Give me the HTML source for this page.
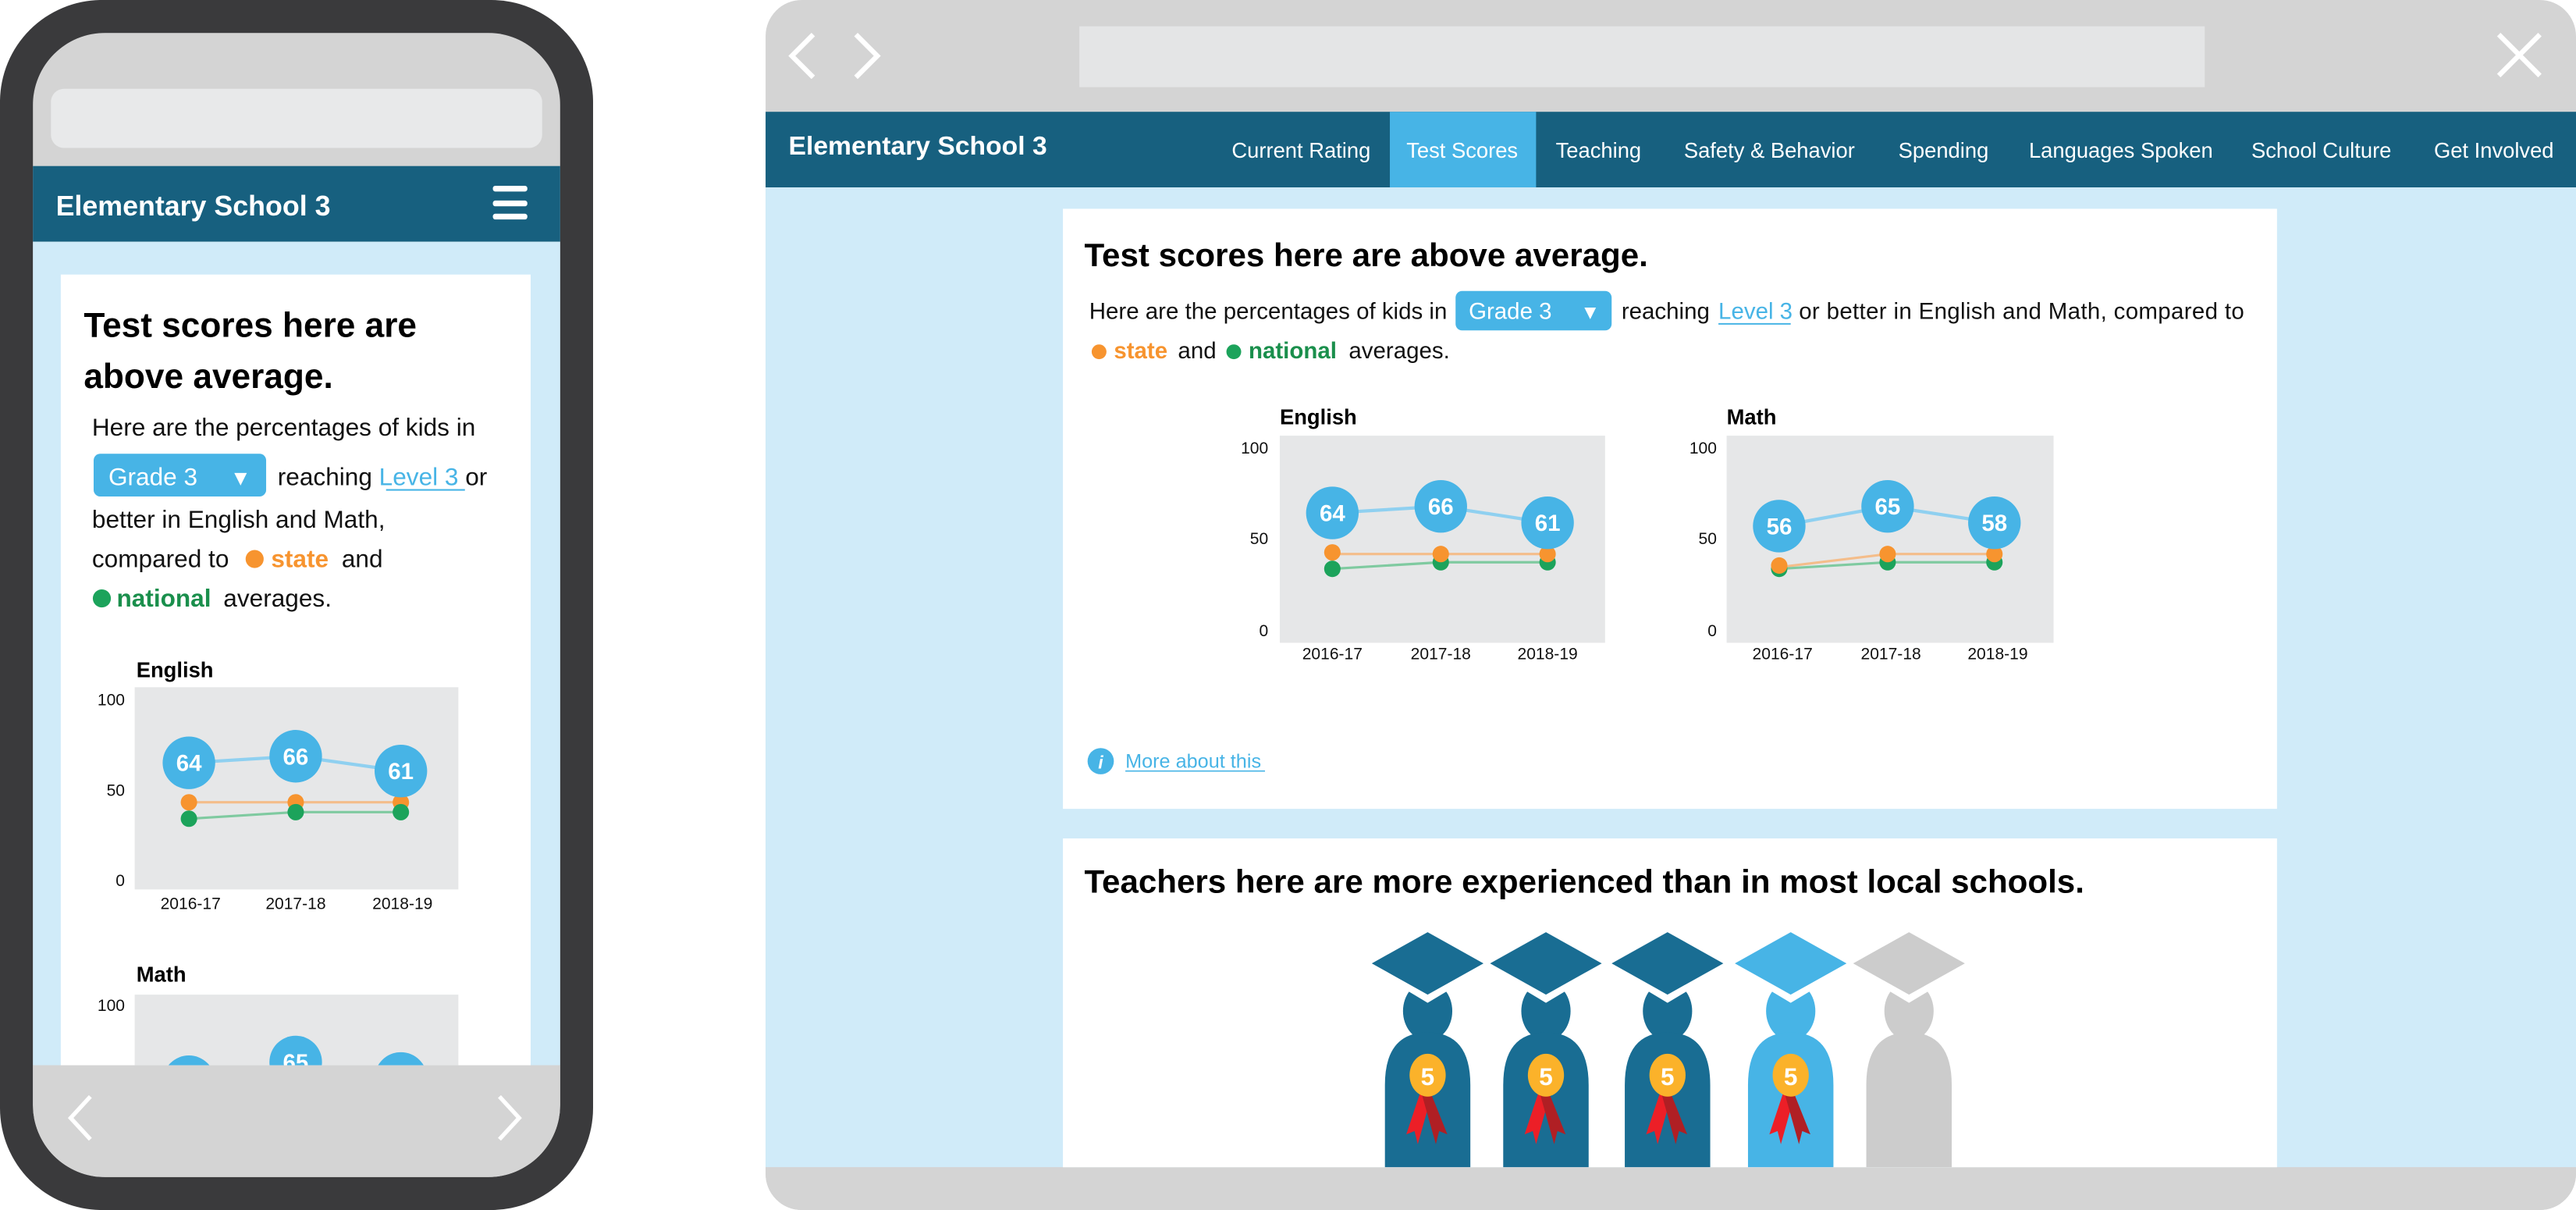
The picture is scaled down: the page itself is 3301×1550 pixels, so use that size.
<!DOCTYPE html>
<html><head><meta charset="utf-8"><style>
html,body{margin:0;padding:0;background:#fff;width:3301px;height:1550px;overflow:hidden}
svg{display:block}
text{font-family:"Liberation Sans",sans-serif}
</style></head><body>
<svg width="3301" height="1550" viewBox="0 0 1568 736" preserveAspectRatio="none" xmlns="http://www.w3.org/2000/svg">
<defs>
<clipPath id="phoneScreen"><rect x="20" y="20" width="321" height="696" rx="44"/></clipPath>
<clipPath id="phoneContent"><rect x="20" y="147" width="321" height="501"/></clipPath>
<clipPath id="browser"><rect x="466" y="0" width="1102" height="736" rx="22"/></clipPath>
<clipPath id="card2"><rect x="647" y="510" width="739" height="200"/></clipPath>
<g id="fig">
<ellipse cx="0" cy="615" rx="15" ry="18"/>
<path d="M-26,710 L-26,660 Q-26,628 0,628 Q26,628 26,660 L26,710 Z"/>
</g>
<g id="notch"><polygon points="-20,585 -20,598 0,610 20,598 20,585" fill="#fff"/></g>
<g id="medal">
<path d="M-3,660 L-13,690 L-8,688 L-6,696 L3,664 Z" fill="#ec1f27"/>
<path d="M0,660 L12,690 L7,688 L5,696 L-4,664 Z" fill="#b01f24"/>
<ellipse cx="0" cy="654" rx="11" ry="13" fill="#fbb22a"/>
<text x="0" y="660" font-size="15" font-weight="bold" fill="#fff" text-anchor="middle">5</text>
</g>
</defs>

<!-- PHONE -->
<rect x="0" y="0" width="361" height="736" rx="62" fill="#3a3a3c"/>
<g clip-path="url(#phoneScreen)">
<rect x="20" y="20" width="321" height="696" fill="#d4d4d4"/>
<rect x="31" y="54" width="299" height="36" rx="8" fill="#e8e9ea"/>
<rect x="20" y="101" width="321" height="46" fill="#17607f"/>
<text x="34" y="131" font-size="17" font-weight="bold" fill="#fff">Elementary School 3</text>
<rect x="300" y="113" width="21" height="3.5" rx="1.5" fill="#fff"/>
<rect x="300" y="122" width="21" height="3.5" rx="1.5" fill="#fff"/>
<rect x="300" y="130" width="21" height="3.5" rx="1.5" fill="#fff"/>
<g clip-path="url(#phoneContent)">
<rect x="20" y="147" width="321" height="501" fill="#d0ebf9"/>
<rect x="37" y="167" width="286" height="500" fill="#fff"/>
<text x="51" y="205" font-size="21" font-weight="bold" fill="#000">Test scores here are</text>
<text x="51" y="236" font-size="21" font-weight="bold" fill="#000">above average.</text>
<text x="56" y="265" font-size="15" fill="#111">Here are the percentages of kids in</text>
<rect x="57" y="276" width="105" height="26" rx="4" fill="#47b4e6"/>
<text x="66" y="295" font-size="15" fill="#fff">Grade 3</text>
<text x="140" y="295" font-size="13" fill="#fff">▼</text>
<text x="169" y="295" font-size="15" fill="#111">reaching <tspan fill="#47b4e6">Level 3</tspan> or</text>
<line x1="235" y1="298" x2="283" y2="298" stroke="#47b4e6" stroke-width="1"/>
<text x="56" y="321" font-size="15" fill="#111">better in English and Math,</text>
<text x="56" y="345" font-size="15" fill="#111">compared to</text>
<circle cx="155" cy="340" r="5.5" fill="#f7942f"/>
<text x="165" y="345" font-size="15" font-weight="bold" fill="#f7942f">state</text>
<text x="208" y="345" font-size="15" fill="#111">and</text>
<circle cx="62" cy="364" r="5.5" fill="#1ca35b"/>
<text x="71" y="369" font-size="15" font-weight="bold" fill="#1a8f4c">national</text>
<text x="136" y="369" font-size="15" fill="#111">averages.</text>
<text x="83" y="412" font-size="13" font-weight="bold" fill="#000">English</text>
<rect x="82" y="418" width="197" height="123" fill="#e6e7e8"/>
<text x="76" y="429" font-size="10" fill="#111" text-anchor="end">100</text>
<text x="76" y="484" font-size="10" fill="#111" text-anchor="end">50</text>
<text x="76" y="539" font-size="10" fill="#111" text-anchor="end">0</text>
<text x="116" y="553" font-size="10" fill="#111" text-anchor="middle">2016-17</text>
<text x="180" y="553" font-size="10" fill="#111" text-anchor="middle">2017-18</text>
<text x="245" y="553" font-size="10" fill="#111" text-anchor="middle">2018-19</text>
<polyline points="115,488 180,488 244,488" fill="none" stroke="#f4bd8a" stroke-width="1.5"/>
<polyline points="115,498 180,494 244,494" fill="none" stroke="#7fcaa0" stroke-width="1.5"/>
<circle cx="115" cy="488" r="5" fill="#f7942f"/><circle cx="180" cy="488" r="5" fill="#f7942f"/><circle cx="244" cy="488" r="5" fill="#f7942f"/>
<circle cx="115" cy="498" r="5" fill="#1ca35b"/><circle cx="180" cy="494" r="5" fill="#1ca35b"/><circle cx="244" cy="494" r="5" fill="#1ca35b"/>
<polyline points="115,464 180,460 244,469" fill="none" stroke="#8fd0f0" stroke-width="2"/>
<circle cx="115" cy="464" r="16" fill="#47b4e6"/><circle cx="180" cy="460" r="16" fill="#47b4e6"/><circle cx="244" cy="469" r="16" fill="#47b4e6"/>
<text x="115" y="469" font-size="14" font-weight="bold" fill="#fff" text-anchor="middle">64</text>
<text x="180" y="465" font-size="14" font-weight="bold" fill="#fff" text-anchor="middle">66</text>
<text x="244" y="474" font-size="14" font-weight="bold" fill="#fff" text-anchor="middle">61</text>
<text x="83" y="597" font-size="13" font-weight="bold" fill="#000">Math</text>
<rect x="82" y="605" width="197" height="60" fill="#e6e7e8"/>
<text x="76" y="615" font-size="10" fill="#111" text-anchor="end">100</text>
<circle cx="115" cy="658" r="16" fill="#47b4e6"/><circle cx="180" cy="646" r="16" fill="#47b4e6"/><circle cx="244" cy="656" r="16" fill="#47b4e6"/>
<text x="180" y="651" font-size="14" font-weight="bold" fill="#fff" text-anchor="middle">65</text>
</g>
<rect x="20" y="648" width="321" height="68" fill="#d4d4d4"/>
<polyline points="55,667 43,680 55,693" fill="none" stroke="#fff" stroke-width="2.5"/>
<polyline points="304,667 316,680 304,693" fill="none" stroke="#fff" stroke-width="2.5"/>
</g>

<!-- BROWSER -->
<g clip-path="url(#browser)">
<rect x="466" y="0" width="1102" height="736" fill="#d4d4d4"/>
<rect x="657" y="16" width="685" height="37" fill="#e4e5e6"/>
<polyline points="495,21 482,34 495,47" fill="none" stroke="#fff" stroke-width="3"/>
<polyline points="521,21 534,34 521,47" fill="none" stroke="#fff" stroke-width="3"/>
<line x1="1521" y1="21" x2="1546" y2="46" stroke="#fff" stroke-width="3"/>
<line x1="1546" y1="21" x2="1521" y2="46" stroke="#fff" stroke-width="3"/>
<rect x="466" y="68" width="1102" height="46" fill="#17607f"/>
<text x="480" y="94" font-size="16" font-weight="bold" fill="#fff">Elementary School 3</text>
<rect x="846" y="68" width="89" height="46" fill="#47b4e6"/>
<g font-size="13" fill="#fff" text-anchor="middle">
<text x="792" y="96">Current Rating</text>
<text x="890" y="96">Test Scores</text>
<text x="973" y="96">Teaching</text>
<text x="1077" y="96">Safety &amp; Behavior</text>
<text x="1183" y="96">Spending</text>
<text x="1291" y="96">Languages Spoken</text>
<text x="1413" y="96">School Culture</text>
<text x="1518" y="96">Get Involved</text>
</g>
<rect x="466" y="114" width="1102" height="596" fill="#d0ebf9"/>
<rect x="466" y="710" width="1102" height="26" fill="#d4d4d4"/>

<rect x="647" y="127" width="739" height="365" fill="#fff"/>
<text x="660" y="162" font-size="20" font-weight="bold" fill="#000">Test scores here are above average.</text>
<text x="663" y="194" font-size="14" fill="#111">Here are the percentages of kids in</text>
<rect x="886" y="177" width="95" height="24" rx="4" fill="#47b4e6"/>
<text x="894" y="194" font-size="14" fill="#fff">Grade 3</text>
<text x="962" y="194" font-size="12" fill="#fff">▼</text>
<text x="987" y="194" font-size="14" fill="#111">reaching</text>
<text x="1046" y="194" font-size="14" fill="#47b4e6">Level 3</text>
<line x1="1046" y1="197" x2="1090" y2="197" stroke="#47b4e6" stroke-width="1"/>
<text x="1095" y="194" font-size="14" fill="#111" textLength="271">or better in English and Math, compared to</text>
<circle cx="669" cy="214" r="4.5" fill="#f7942f"/>
<text x="678" y="218" font-size="14" font-weight="bold" fill="#f7942f">state</text>
<text x="717" y="218" font-size="14" fill="#111">and</text>
<circle cx="751" cy="214" r="4.5" fill="#1ca35b"/>
<text x="760" y="218" font-size="14" font-weight="bold" fill="#1a8f4c">national</text>
<text x="821" y="218" font-size="14" fill="#111">averages.</text>

<text x="779" y="258" font-size="13" font-weight="bold" fill="#000">English</text>
<rect x="779" y="265" width="198" height="126" fill="#e6e7e8"/>
<g font-size="10" fill="#111">
<text x="772" y="276" text-anchor="end">100</text>
<text x="772" y="331" text-anchor="end">50</text>
<text x="772" y="387" text-anchor="end">0</text>
<text x="811" y="401" text-anchor="middle">2016-17</text>
<text x="877" y="401" text-anchor="middle">2017-18</text>
<text x="942" y="401" text-anchor="middle">2018-19</text>
</g>
<polyline points="811,337 877,337 942,337" fill="none" stroke="#f4bd8a" stroke-width="1.5"/>
<polyline points="811,346 877,342 942,342" fill="none" stroke="#7fcaa0" stroke-width="1.5"/>
<circle cx="811" cy="346" r="5" fill="#1ca35b"/><circle cx="877" cy="342" r="5" fill="#1ca35b"/><circle cx="942" cy="342" r="5" fill="#1ca35b"/>
<circle cx="811" cy="336" r="5" fill="#f7942f"/><circle cx="877" cy="337" r="5" fill="#f7942f"/><circle cx="942" cy="337" r="5" fill="#f7942f"/>
<polyline points="811,312 877,308 942,318" fill="none" stroke="#8fd0f0" stroke-width="2"/>
<circle cx="811" cy="312" r="16" fill="#47b4e6"/><circle cx="877" cy="308" r="16" fill="#47b4e6"/><circle cx="942" cy="318" r="16" fill="#47b4e6"/>
<g font-size="14" font-weight="bold" fill="#fff" text-anchor="middle">
<text x="811" y="317">64</text><text x="877" y="313">66</text><text x="942" y="323">61</text>
</g>

<text x="1051" y="258" font-size="13" font-weight="bold" fill="#000">Math</text>
<rect x="1051" y="265" width="199" height="126" fill="#e6e7e8"/>
<g font-size="10" fill="#111">
<text x="1045" y="276" text-anchor="end">100</text>
<text x="1045" y="331" text-anchor="end">50</text>
<text x="1045" y="387" text-anchor="end">0</text>
<text x="1085" y="401" text-anchor="middle">2016-17</text>
<text x="1151" y="401" text-anchor="middle">2017-18</text>
<text x="1216" y="401" text-anchor="middle">2018-19</text>
</g>
<polyline points="1083,345 1149,337 1214,337" fill="none" stroke="#f4bd8a" stroke-width="1.5"/>
<polyline points="1083,346 1149,342 1214,342" fill="none" stroke="#7fcaa0" stroke-width="1.5"/>
<circle cx="1083" cy="346" r="5" fill="#1ca35b"/><circle cx="1149" cy="342" r="5" fill="#1ca35b"/><circle cx="1214" cy="342" r="5" fill="#1ca35b"/>
<circle cx="1083" cy="344" r="5" fill="#f7942f"/><circle cx="1149" cy="337" r="5" fill="#f7942f"/><circle cx="1214" cy="337" r="5" fill="#f7942f"/>
<polyline points="1083,320 1149,308 1214,318" fill="none" stroke="#8fd0f0" stroke-width="2"/>
<circle cx="1083" cy="320" r="16" fill="#47b4e6"/><circle cx="1149" cy="308" r="16" fill="#47b4e6"/><circle cx="1214" cy="318" r="16" fill="#47b4e6"/>
<g font-size="14" font-weight="bold" fill="#fff" text-anchor="middle">
<text x="1083" y="325">56</text><text x="1149" y="313">65</text><text x="1214" y="323">58</text>
</g>

<circle cx="670" cy="463" r="8" fill="#47b4e6"/>
<text x="670" y="467.5" font-size="11" font-weight="bold" font-style="italic" fill="#fff" text-anchor="middle">i</text>
<text x="685" y="467" font-size="12" fill="#47b4e6">More about this</text>
<line x1="685" y1="469" x2="770" y2="469" stroke="#47b4e6" stroke-width="0.8"/>

<rect x="647" y="510" width="739" height="200" fill="#fff"/>
<text x="660" y="543" font-size="20" font-weight="bold" fill="#000">Teachers here are more experienced than in most local schools.</text>
<g clip-path="url(#card2)">
<g transform="translate(869,0)"><use href="#fig" fill="#196d93"/><use href="#notch"/><polygon points="0,567 34,586 0,605 -34,586" fill="#196d93"/><use href="#medal"/></g>
<g transform="translate(941,0)"><use href="#fig" fill="#196d93"/><use href="#notch"/><polygon points="0,567 34,586 0,605 -34,586" fill="#196d93"/><use href="#medal"/></g>
<g transform="translate(1015,0)"><use href="#fig" fill="#196d93"/><use href="#notch"/><polygon points="0,567 34,586 0,605 -34,586" fill="#196d93"/><use href="#medal"/></g>
<g transform="translate(1090,0)"><use href="#fig" fill="#47b4e6"/><use href="#notch"/><polygon points="0,567 34,586 0,605 -34,586" fill="#47b4e6"/><use href="#medal"/></g>
<g transform="translate(1162,0)"><use href="#fig" fill="#cccccc"/><use href="#notch"/><polygon points="0,567 34,586 0,605 -34,586" fill="#cccccc"/></g>
</g>
</g>
</svg>
</body></html>
